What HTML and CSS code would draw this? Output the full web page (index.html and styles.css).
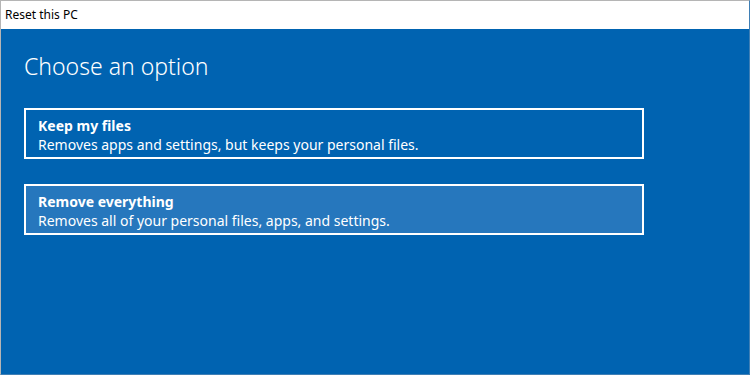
FILE: index.html
```html
<!DOCTYPE html>
<html lang="en">
<head>
<meta charset="utf-8">
<title>Reset this PC</title>
<link rel="stylesheet" href="styles.css">
</head>
<body>
<div class="window">
  <div class="titlebar">Reset this PC</div>
  <main class="content">
    <h1 class="heading">Choose an option</h1>
    <div class="options">
      <div class="option">
        <div class="option-title">Keep my files</div>
        <div class="option-desc">Removes apps and settings, but keeps your personal files.</div>
      </div>
      <div class="option option-hover">
        <div class="option-title">Remove everything</div>
        <div class="option-desc">Removes all of your personal files, apps, and settings.</div>
      </div>
    </div>
  </main>
</div>
</body>
</html>
```

FILE: styles.css
```css
html, body {
  margin: 0;
  padding: 0;
  height: 100%;
}
body {
  font-family: "Noto Sans", "Open Sans", sans-serif;
  background: #0063b1;
}
.window {
  height: 375px;
  box-sizing: border-box;
  border-top: 1px solid #b5b5b5;
  border-left: 1px solid #b5b5b5;
  border-right: 1px solid #3f7fb5;
  border-bottom: 1px solid #3f7fb5;
  display: flex;
  flex-direction: column;
}
.titlebar {
  height: 28px;
  background: #fff;
  color: #000;
  font-size: 12px;
  line-height: 28px;
  padding-left: 4px;
  flex: none;
}
.content {
  flex: 1;
  background: #0063b1;
  padding: 21px 0 0 23px;
  color: #fff;
}
.heading {
  margin: 0;
  font-size: 23px;
  font-weight: 300;
  line-height: 32px;
  color: #fff;
}
.options {
  margin-top: 26px;
  display: flex;
  flex-direction: column;
  gap: 25px;
}
.option {
  width: 620px;
  border: 2px solid #fff;
  padding: 7px 12px 5px;
  box-sizing: border-box;
  height: 51px;
}
.option-hover {
  background: #2677bd;
}
.option-title {
  font-weight: 700;
  font-size: 14px;
  line-height: 18px;
}
.option-desc {
  font-size: 14px;
  line-height: 19px;
}
```
